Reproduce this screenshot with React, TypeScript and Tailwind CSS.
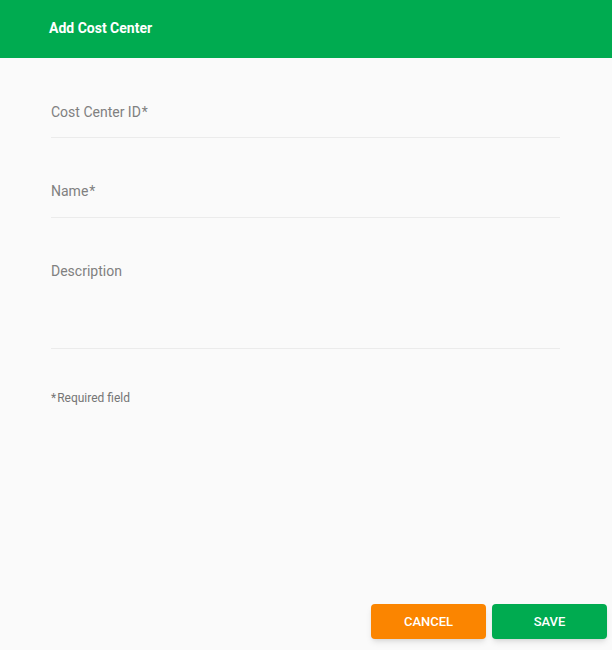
export default function App() {
  return (
    <div className="min-h-screen flex flex-col bg-[#fafafa] font-['Roboto',sans-serif]">
      <div className="h-[58px] bg-[#00ab50] flex items-center px-[49px] pb-[2px]">
        <h1 className="text-white text-[14px] font-bold">Add Cost Center</h1>
      </div>

      <div className="pl-[51px] pr-[52px]">
        <div className="mt-[44px] pb-[15px] border-b border-[#ebebeb]">
          <label className="block text-[14px] leading-[20px] text-[#808080]">
            Cost Center ID<span className="ml-[1px]">*</span>
          </label>
        </div>
        <div className="mt-[43px] pb-[16px] border-b border-[#ebebeb]">
          <label className="block text-[14px] leading-[20px] text-[#808080]">
            Name<span className="ml-[1px]">*</span>
          </label>
        </div>
        <div className="mt-[43px] pb-[67px] border-b border-[#ebebeb]">
          <label className="block text-[14px] leading-[20px] text-[#808080]">Description</label>
        </div>
        <p className="mt-[41px] text-[12px] leading-[16px] text-[#757575]">
          <span className="mr-[1px]">*</span>Required field
        </p>
      </div>

      <div className="mt-auto flex justify-end gap-[6px] pr-[5px] pb-[11px]">
        <button className="w-[115px] h-[35px] rounded-sm bg-[#fb8500] text-white text-[13px] font-medium uppercase shadow-md">
          Cancel
        </button>
        <button className="w-[115px] h-[35px] rounded-sm bg-[#00ab50] text-white text-[13px] font-medium uppercase shadow-md">
          Save
        </button>
      </div>
    </div>
  );
}
